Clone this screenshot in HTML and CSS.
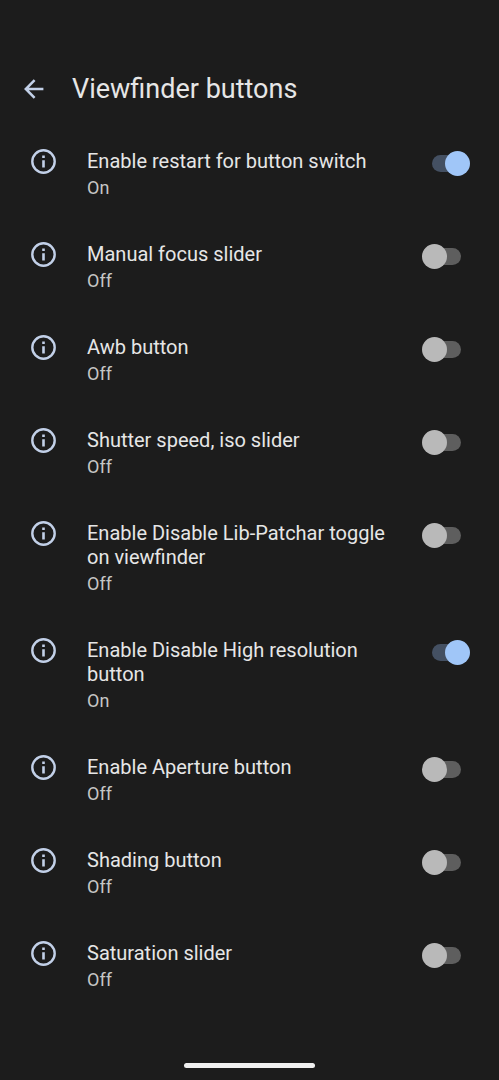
FILE: index.html
```html
<!DOCTYPE html>
<html lang="en">
<head>
  <meta charset="UTF-8">
  <meta name="viewport" content="width=device-width, initial-scale=1.0">
  <title>Viewfinder buttons</title>
  <link rel="stylesheet" href="styles.css">
</head>
<body>
  <svg class="sprite" aria-hidden="true">
    <symbol id="info" viewBox="0 0 25 25">
      <circle cx="12.5" cy="12.5" r="11.2" fill="none" stroke="currentColor" stroke-width="2.4"/>
      <path d="M11.2 6.4h2.6v2.5h-2.6zM11.2 11.2h2.6v7.3h-2.6z" fill="currentColor"/>
    </symbol>
  </svg>

  <header class="toolbar">
    <button class="back" type="button" aria-label="Back">
      <svg viewBox="0 0 20 20" width="20" height="20">
        <path d="M10.6 1.2L1.8 10l8.8 8.8M1.8 10H19.4" fill="none" stroke="currentColor" stroke-width="2.5"/>
      </svg>
    </button>
    <h1>Viewfinder buttons</h1>
  </header>

  <main class="settings">
    <label class="setting">
      <svg class="icon"><use href="#info"/></svg>
      <span class="text">
        <span class="title">Enable restart for button switch</span>
        <span class="summary">On</span>
      </span>
      <input class="switch" type="checkbox" checked>
    </label>
    <label class="setting">
      <svg class="icon"><use href="#info"/></svg>
      <span class="text">
        <span class="title">Manual focus slider</span>
        <span class="summary">Off</span>
      </span>
      <input class="switch" type="checkbox">
    </label>
    <label class="setting">
      <svg class="icon"><use href="#info"/></svg>
      <span class="text">
        <span class="title">Awb button</span>
        <span class="summary">Off</span>
      </span>
      <input class="switch" type="checkbox">
    </label>
    <label class="setting">
      <svg class="icon"><use href="#info"/></svg>
      <span class="text">
        <span class="title">Shutter speed, iso slider</span>
        <span class="summary">Off</span>
      </span>
      <input class="switch" type="checkbox">
    </label>
    <label class="setting">
      <svg class="icon"><use href="#info"/></svg>
      <span class="text">
        <span class="title">Enable Disable Lib-Patchar toggle on viewfinder</span>
        <span class="summary">Off</span>
      </span>
      <input class="switch" type="checkbox">
    </label>
    <label class="setting">
      <svg class="icon"><use href="#info"/></svg>
      <span class="text">
        <span class="title">Enable Disable High resolution button</span>
        <span class="summary">On</span>
      </span>
      <input class="switch" type="checkbox" checked>
    </label>
    <label class="setting">
      <svg class="icon"><use href="#info"/></svg>
      <span class="text">
        <span class="title">Enable Aperture button</span>
        <span class="summary">Off</span>
      </span>
      <input class="switch" type="checkbox">
    </label>
    <label class="setting">
      <svg class="icon"><use href="#info"/></svg>
      <span class="text">
        <span class="title">Shading button</span>
        <span class="summary">Off</span>
      </span>
      <input class="switch" type="checkbox">
    </label>
    <label class="setting">
      <svg class="icon"><use href="#info"/></svg>
      <span class="text">
        <span class="title">Saturation slider</span>
        <span class="summary">Off</span>
      </span>
      <input class="switch" type="checkbox">
    </label>
  </main>

  <footer class="nav-bar">
    <div class="nav-handle"></div>
  </footer>
</body>
</html>
```

FILE: styles.css
```css
* {
  box-sizing: border-box;
}
body {
  display: flex;
  flex-direction: column;
  min-height: 100vh;
  margin: 0;
  background-color: #1c1c1c;
  color: #e6e6e6;
  font-family: "Google Sans", Roboto, sans-serif;
}
.sprite {
  display: none;
}
.toolbar {
  display: flex;
  align-items: center;
  gap: 18px;
  padding: 69px 24px 18px 14px;
}
.toolbar h1 {
  margin: 0;
  font-size: 27px;
  font-weight: 400;
  line-height: 40px;
}
.back {
  display: flex;
  align-items: center;
  justify-content: center;
  width: 40px;
  height: 40px;
  padding: 0;
  border: 0;
  background: none;
  color: #c2d0e8;
}
.setting {
  display: flex;
  align-items: flex-start;
  padding: 22px 29px 21px 31px;
}
.icon {
  flex: none;
  width: 25px;
  height: 25px;
  margin-right: 31px;
  color: #c2d0e8;
}
.text {
  flex: 1;
  display: flex;
  flex-direction: column;
  gap: 4px;
}
.title {
  font-size: 20px;
  line-height: 24px;
}
.summary {
  color: #c6c6c6;
  font-size: 18px;
  line-height: 22px;
}
.switch {
  appearance: none;
  flex: none;
  position: relative;
  width: 48px;
  height: 25px;
  margin: 2px 0 0 24px;
}
.switch::before {
  content: "";
  position: absolute;
  top: 4px;
  left: 10px;
  width: 29px;
  height: 17px;
  border-radius: 9px;
  background-color: #5e5e5e;
}
.switch::after {
  content: "";
  position: absolute;
  top: 0;
  left: 0;
  width: 25px;
  height: 25px;
  border-radius: 50%;
  background-color: #b9b9b9;
}
.switch:checked::before {
  background-color: #445062;
}
.switch:checked::after {
  left: auto;
  right: 0;
  background-color: #a0c6f8;
}
.nav-bar {
  display: flex;
  justify-content: center;
  margin-top: auto;
  padding: 12px;
}
.nav-handle {
  width: 131px;
  height: 5px;
  border-radius: 3px;
  background-color: #f0f0f0;
}
```
